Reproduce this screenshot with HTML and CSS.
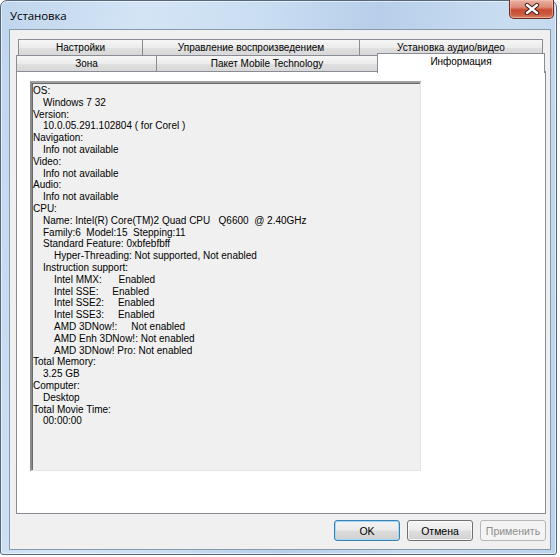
FILE: index.html
```html
<!DOCTYPE html>
<html lang="ru">
<head>
<meta charset="utf-8">
<title>Установка</title>
<link rel="stylesheet" href="styles.css">
</head>
<body>
<div class="window">
  <div class="titlebar">
    <span class="title">Установка</span>
    <div class="close">
      <svg width="16" height="12" viewBox="0 0 16 12">
        <path d="M3 2 L13 10 M13 2 L3 10" stroke="#3a1a16" stroke-width="4.2" stroke-linecap="round"/>
        <path d="M3 2 L13 10 M13 2 L3 10" stroke="#ffffff" stroke-width="2.4" stroke-linecap="round"/>
      </svg>
    </div>
  </div>
  <div class="client">
    <div class="tabs">
      <div class="tabrow back">
        <div class="tab t-set">Настройки</div>
        <div class="tab t-play">Управление воспроизведением</div>
        <div class="tab t-av">Установка аудио/видео</div>
      </div>
      <div class="tabrow front">
        <div class="tab t-zone">Зона</div>
        <div class="tab t-mobile">Пакет Mobile Technology</div>
        <div class="tab t-info active">Информация</div>
      </div>
      <div class="panel">
        <div class="infobox">
<div class="ln">OS:</div>
<div class="ln l1">Windows 7 32</div>
<div class="ln">Version:</div>
<div class="ln l1">10.0.05.291.102804 ( for Corel )</div>
<div class="ln">Navigation:</div>
<div class="ln l1">Info not available</div>
<div class="ln">Video:</div>
<div class="ln l1">Info not available</div>
<div class="ln">Audio:</div>
<div class="ln l1">Info not available</div>
<div class="ln">CPU:</div>
<div class="ln l1">Name: Intel(R) Core(TM)2 Quad CPU   Q6600  @ 2.40GHz</div>
<div class="ln l1">Family:6  Model:15  Stepping:11</div>
<div class="ln l1">Standard Feature: 0xbfebfbff</div>
<div class="ln l2">Hyper-Threading: Not supported, Not enabled</div>
<div class="ln l1">Instruction support:</div>
<div class="ln l2">Intel MMX:      Enabled</div>
<div class="ln l2">Intel SSE:     Enabled</div>
<div class="ln l2">Intel SSE2:     Enabled</div>
<div class="ln l2">Intel SSE3:     Enabled</div>
<div class="ln l2">AMD 3DNow!:     Not enabled</div>
<div class="ln l2">AMD Enh 3DNow!: Not enabled</div>
<div class="ln l2">AMD 3DNow! Pro: Not enabled</div>
<div class="ln">Total Memory:</div>
<div class="ln l1">3.25 GB</div>
<div class="ln">Computer:</div>
<div class="ln l1">Desktop</div>
<div class="ln">Total Movie Time:</div>
<div class="ln l1">00:00:00</div>
        </div>
      </div>
    </div>
    <div class="buttons">
      <div class="btn default">OK</div>
      <div class="btn">Отмена</div>
      <div class="btn disabled">Применить</div>
    </div>
  </div>
</div>
</body>
</html>
```
FILE: styles.css
```css
html, body {
  margin: 0;
  padding: 0;
  background: #ffffff;
}

body {
  font-family: "Liberation Sans", Arial, sans-serif;
  font-size: 10px;
  color: #000;
}

.window {
  box-sizing: border-box;
  width: 557px;
  height: 555px;
  border: 1px solid #56687c;
  border-radius: 7px 7px 3px 3px;
  background: linear-gradient(100deg, #c0d6ee 0%, #d3e4f5 22%, #cadef2 40%, #b7cfea 58%, #c9ddf1 78%, #bcd3ec 100%);
  box-shadow: inset 0 0 0 1px rgba(255,255,255,0.55);
  display: flex;
  flex-direction: column;
}

.titlebar {
  height: 28px;
  display: flex;
  justify-content: space-between;
  align-items: flex-start;
}

.title {
  font-family: "Open Sans", "Noto Sans", sans-serif;
  font-size: 11.5px;
  color: #000;
  padding: 7px 0 0 9px;
  letter-spacing: -0.1px;
}

.close {
  width: 45px;
  height: 19px;
  box-sizing: border-box;
  margin: -1px 2px 0 0;
  border: 1px solid #6b2c25;
  border-top: none;
  border-radius: 0 0 5px 5px;
  background: linear-gradient(#e9b0a3 0%, #dd8a77 40%, #c84a33 55%, #c95a3e 80%, #d98a6c 100%);
  box-shadow: inset 0 0 0 1px rgba(255,210,200,0.45);
  display: flex;
  align-items: center;
  justify-content: center;
}

.client {
  box-sizing: border-box;
  width: 542px;
  height: 521px;
  margin-left: 8px;
  border: 1px solid #8699ad;
  background: #f0f0f0;
  display: flex;
  flex-direction: column;
}

.tabs {
  padding: 9px 4px 0 6px;
  display: flex;
  flex-direction: column;
}

.tabrow {
  display: flex;
  height: 16px;
}

.tabrow.back {
  padding-left: 2px;
}

.tab {
  box-sizing: border-box;
  height: 17px;
  border: 1px solid #898c95;
  margin-right: -1px;
  background: linear-gradient(#f6f6f6 0%, #ececec 50%, #e0e0e0 52%, #d8d8d8 100%);
  text-align: center;
  line-height: 15px;
  color: #000;
  white-space: nowrap;
}

.t-set { width: 125px; }
.t-play { width: 218px; }
.t-av { width: 184px; }

.t-zone { width: 141px; }
.t-mobile { width: 222px; }
.t-info { width: 168px; }

.tab.active {
  position: relative;
  z-index: 2;
  margin-top: -2px;
  height: 20px;
  background: #ffffff;
  border-bottom: none;
  line-height: 15px;
}

.panel {
  box-sizing: border-box;
  height: 443px;
  border: 1px solid #898c95;
  background: #ffffff;
  padding: 9px 0 0 13px;
  position: relative;
  z-index: 1;
}

.infobox {
  box-sizing: border-box;
  width: 391px;
  height: 390px;
  background: #f0f0f0;
  border-top: 2px solid #a0a0a0;
  border-left: 2px solid #8a8a8a;
  border-right: 1px solid #e3e3e3;
  border-bottom: 1px solid #e3e3e3;
  box-shadow: inset 1px 1px 0 #696969;
  padding: 2px 0 0 1px;
}

.ln {
  white-space: pre;
  line-height: 11.8px;
  height: 11.8px;
}

.l1 { padding-left: 10px; }
.l2 { padding-left: 21px; }

.buttons {
  display: flex;
  justify-content: flex-end;
  gap: 7px;
  padding: 6px 4px 0 0;
}

.btn {
  box-sizing: border-box;
  height: 21px;
  width: 66px;
  border: 1px solid #707070;
  border-radius: 3px;
  background: linear-gradient(#f4f4f4 0%, #ececec 48%, #dedede 52%, #d2d2d2 100%);
  box-shadow: inset 0 0 0 1px rgba(255,255,255,0.7);
  font-size: 10.5px;
  display: flex;
  align-items: center;
  justify-content: center;
}

.btn.default {
  border-color: #3c7fb1;
  box-shadow: inset 0 0 0 1px #9fd9f5;
  background: linear-gradient(#f2f2f2 0%, #ebebeb 48%, #dddddd 52%, #cfcfcf 100%);
}

.btn.disabled {
  border-color: #b5b8bb;
  background: #f4f4f4;
  box-shadow: none;
  color: #8d8d8d;
}
```
